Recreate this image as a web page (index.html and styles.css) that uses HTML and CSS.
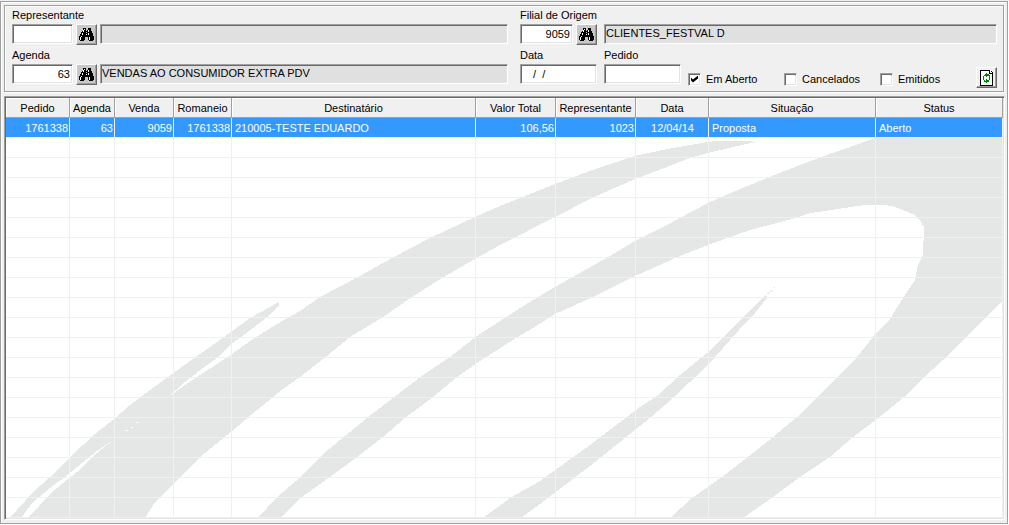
FILE: index.html
```html
<!DOCTYPE html>
<html lang="pt-BR">
<head>
<meta charset="utf-8">
<title>Pedidos</title>
<link rel="stylesheet" href="styles.css">
</head>
<body>
<svg class="defs" aria-hidden="true">
  <symbol id="binoculars" viewBox="0 0 15 13">
    <path d="M4 0h3v2h1V2h1V0h3v3h1v2h1v3h1v4h-1v1h-4v-1H9V9H6v3H5v1H1v-1H0V8h1V6h1V4h1V3h1z"/>
    <path fill="#c8c8c8" d="M7 1h1v2H7zM7 4h1v1H7z"/>
    <path fill="#fff" d="M4 2h1v2H4zM9 2h1v2H9zM3 5h1v2H3zM2 8h1v1H2zM1 9h1v3H1zM7 6h1v1H7zM9 5h1v2H9zM10 9h1v3h-1zM5 1h1v1H5z"/>
  </symbol>
</svg>
<main class="window">
  <form class="filters">
    <div class="column">
      <div class="field">
        <label for="representante">Representante</label>
        <div class="lookup">
          <input class="box code" id="representante" type="text">
          <button class="tool" type="button" aria-label="Buscar representante"><svg class="find"><use href="#binoculars"/></svg></button>
          <input class="box name" type="text" aria-label="Nome do representante" readonly>
        </div>
      </div>
      <div class="field">
        <label for="agenda">Agenda</label>
        <div class="lookup">
          <input class="box code" id="agenda" type="text" value="63">
          <button class="tool" type="button" aria-label="Buscar agenda"><svg class="find"><use href="#binoculars"/></svg></button>
          <input class="box name" type="text" aria-label="Nome da agenda" value="VENDAS AO CONSUMIDOR EXTRA PDV" readonly>
        </div>
      </div>
    </div>
    <div class="column">
      <div class="field">
        <label for="filial">Filial de Origem</label>
        <div class="lookup branch">
          <input class="box code" id="filial" type="text" value="9059">
          <button class="tool" type="button" aria-label="Buscar filial"><svg class="find"><use href="#binoculars"/></svg></button>
          <input class="box name" type="text" aria-label="Nome da filial" value="CLIENTES_FESTVAL D" readonly>
        </div>
      </div>
      <div class="options">
        <div class="field">
          <label for="data">Data</label>
          <input class="box short" id="data" type="text" value="  /  /">
        </div>
        <div class="field">
          <label for="pedido">Pedido</label>
          <input class="box short" id="pedido" type="text">
        </div>
        <div class="checks">
          <label class="check"><input type="checkbox" checked>Em Aberto</label>
          <label class="check"><input type="checkbox">Cancelados</label>
          <label class="check"><input type="checkbox">Emitidos</label>
        </div>
        <button class="tool refresh" type="button" aria-label="Atualizar">
          <svg class="page" viewBox="0 0 13 16">
            <path fill="#fff" d="M0 0h10l3 3v13H0z"/>
            <path d="M0 0h10v1H1v14h11V4H9V1h1v2h2V2h-1V1h1v1h1v14H0z"/>
            <path fill="#008000" d="M6 3h1v1h2v1h1v3H9V6H7v1H6V6H5V4h1zM3 6h1v4H3zM4 5h1v1H4zM6 9h1v1h2v2H7v1H6v-1H4v-2h1v1h1zM9 8h1v2H9z"/>
          </svg>
        </button>
      </div>
    </div>
  </form>

  <div class="grid">
    <svg class="watermark" viewBox="6 138 997 380" preserveAspectRatio="none" aria-hidden="true">
      <path d="M10 518L32 493 50 477 70 457 95 434 113 420 130 405 150 390 172 374 200 354 231 332 250 318 279 302 279 305 267 317 253 328 233 343 217 358 203 368 185 382 167 398 188 383 200 375 217 364 232 354 250 341 277 324 300 311 320 297 360 276 392 258 430 238 475 217 500 206 555 184 595 169 635 156 667 149 708 142 716 141 746 141 756 142 733 147 708 153 690 158 667 167 635 179 592 198 555 217 500 245 475 259 442 278 412 297 383 317 350 337 327 356 300 377 283 389 257 410 232 431 200 457 183 475 170 487 155 502 145 518H28L50 494 63 483 77 472 97 453 113 440 97 451 77 467 65 477 50 488 33 502 21 518z"/>
      <path d="M258 518L277 497 302 476 323 454 345 436 372 414 393 398 423 375 450 357 477 336 500 321 528 303 555 287 578 274 610 256 635 241 667 225 693 211 708 203 733 192 767 178 800 165 827 155 850 147 875 138H1003V301L983 320 965 338 943 360 923 378 903 398 877 419 853 437 830 457 800 477 773 497 743 518H670L692 498 708 487 722 477 753 453 773 437 797 417 817 397 840 375 857 357 873 337 890 319 903 298 915 280 918 265 923 255 924 227 921 222 915 215 903 210 892 206 884 205H864L838 209 810 213 792 219 765 226 750 230 708 245 680 256 635 276 593 297 555 314 533 328 513 340 477 363 457 377 433 397 405 418 383 437 357 457 330 477 302 497 280 518z"/>
      <path d="M483 518L510 498 540 481 590 445 640 407 657 396 680 375 707 353 722 338 740 320 766 294 767 298 755 313 748 320 730 340 708 365 690 382 673 398 650 418 640 426 590 466 540 504 521 518z"/>
      <path class="fleck" d="M125 430h3v1h-3zM131 427h2v1h-2zM136 422h3v1h-3z"/>
      <path class="speck" d="M767 292h3v2h-3zM770 290h3v2h-3zM773 287h2v1h-2z"/>
    </svg>
    <table>
      <colgroup>
        <col class="w-pedido"><col class="w-agenda"><col class="w-venda"><col class="w-romaneio"><col><col class="w-valor"><col class="w-valor"><col class="w-data"><col class="w-situacao"><col class="w-status">
      </colgroup>
      <thead>
        <tr><th>Pedido</th><th>Agenda</th><th>Venda</th><th>Romaneio</th><th>Destinatário</th><th>Valor Total</th><th>Representante</th><th>Data</th><th>Situação</th><th>Status</th></tr>
      </thead>
      <tbody>
        <tr class="selected"><td class="num">1761338</td><td class="num">63</td><td class="num">9059</td><td class="num">1761338</td><td>210005-TESTE EDUARDO</td><td class="num">106,56</td><td class="num">1023</td><td class="mid">12/04/14</td><td>Proposta</td><td>Aberto</td></tr>
        <tr><td><td><td><td><td><td><td><td><td><td></tr>
        <tr><td><td><td><td><td><td><td><td><td><td></tr>
        <tr><td><td><td><td><td><td><td><td><td><td></tr>
        <tr><td><td><td><td><td><td><td><td><td><td></tr>
        <tr><td><td><td><td><td><td><td><td><td><td></tr>
        <tr><td><td><td><td><td><td><td><td><td><td></tr>
        <tr><td><td><td><td><td><td><td><td><td><td></tr>
        <tr><td><td><td><td><td><td><td><td><td><td></tr>
        <tr><td><td><td><td><td><td><td><td><td><td></tr>
        <tr><td><td><td><td><td><td><td><td><td><td></tr>
        <tr><td><td><td><td><td><td><td><td><td><td></tr>
        <tr><td><td><td><td><td><td><td><td><td><td></tr>
        <tr><td><td><td><td><td><td><td><td><td><td></tr>
        <tr><td><td><td><td><td><td><td><td><td><td></tr>
        <tr><td><td><td><td><td><td><td><td><td><td></tr>
        <tr><td><td><td><td><td><td><td><td><td><td></tr>
        <tr><td><td><td><td><td><td><td><td><td><td></tr>
        <tr><td><td><td><td><td><td><td><td><td><td></tr>
        <tr><td><td><td><td><td><td><td><td><td><td></tr>
      </tbody>
    </table>
  </div>
</main>
</body>
</html>
```
FILE: styles.css
```css
* { box-sizing: border-box; }

body {
  margin: 0;
  padding: 1px 1px 1px 0;
  background: #f0f0f0;
  color: #000;
  font: 11px/14px "Liberation Sans", Arial, sans-serif;
}

input, button { font: inherit; color: inherit; margin: 0; }

.defs { position: absolute; width: 0; height: 0; }

.window {
  display: flex;
  flex-direction: column;
  gap: 4px;
  padding: 3px 2px 3px 3px;
  border: 1px solid #a0a0a0;
  box-shadow: inset 1px 1px #fff, 0 1px #fff, 1px 0 #fff;
}

.filters {
  display: grid;
  grid-template-columns: minmax(0, 496fr) minmax(0, 477fr);
  gap: 12px;
  padding: 2px 6px 3px 7px;
  margin-right: 1px;
  border: 1px solid #a0a0a0;
  box-shadow: inset 1px 1px #fff, 1px 1px #fff;
}

.column { display: flex; flex-direction: column; gap: 4px; min-width: 0; }
.field { display: flex; flex-direction: column; gap: 2px; }

.lookup { display: grid; grid-template-columns: 61px 21px 1fr; gap: 3px; height: 20px; }
.lookup.branch { grid-template-columns: 53px 21px 1fr; }
.lookup.branch .name { justify-self: end; width: calc(100% - 4px); }

.box {
  width: 100%;
  height: 20px;
  min-width: 0;
  padding: 0 1px 1px;
  border: 1px solid;
  border-color: #a0a0a0 #fff #fff #a0a0a0;
  border-radius: 0;
  box-shadow: inset 1px 1px #696969, inset -1px -1px #e3e3e3;
  background: #fff;
  outline: 0;
}
.code { padding: 0 2px 0 0; text-align: right; }
.name { background: #e0e0e0; padding-bottom: 2px; }
.short { width: 77px; }
#data { padding-left: 6px; white-space: pre; }

.tool {
  display: flex;
  flex: none;
  align-items: center;
  justify-content: center;
  width: 21px;
  height: 21px;
  padding: 0;
  border: 1px solid;
  border-color: #fff #696969 #696969 #fff;
  box-shadow: inset -1px -1px #a0a0a0;
  background: #f0f0f0;
}
.lookup .tool { background: #c8c8c8; }
.find { width: 15px; height: 13px; shape-rendering: crispEdges; }
.page { flex: none; width: 13px; height: 16px; shape-rendering: crispEdges; }

.options { display: flex; align-items: flex-start; gap: 7px; }
.checks { display: flex; flex: 1; min-width: 0; margin-top: 24px; }
.check { display: flex; align-items: center; gap: 5px; width: 96px; flex: none; }
.check:last-child { width: auto; }
.check input {
  appearance: none;
  width: 13px;
  height: 13px;
  border: 1px solid;
  border-color: #a0a0a0 #fff #fff #a0a0a0;
  box-shadow: inset 1px 1px #696969, inset -1px -1px #e3e3e3;
  background: #fff;
}
.check input:checked::before {
  content: "";
  display: block;
  width: 7px;
  height: 7px;
  margin: 2px;
  background: #000;
  clip-path: polygon(0 28%, 28% 57%, 100% 0, 100% 42%, 28% 100%, 0 71%);
}
.refresh { margin: 19px 0 0; }

.grid {
  position: relative;
  border: 1px solid;
  border-color: #a0a0a0 #fff #fff #a0a0a0;
  box-shadow: inset 1px 1px #696969, inset -1px -1px #e3e3e3;
  padding: 1px;
  background: #fff;
}

.watermark {
  position: absolute;
  top: 41px;
  left: 1px;
  width: calc(100% - 2px);
  height: calc(100% - 42px);
  fill: #e5e7e6;
  shape-rendering: crispEdges;
}
.watermark .fleck { fill: #fff; }
.watermark .speck { fill: #f0f0ea; }

table {
  position: relative;
  width: 100%;
  table-layout: fixed;
  border-collapse: separate;
  border-spacing: 0;
}
.w-pedido { width: 64px; }
.w-agenda { width: 45px; }
.w-venda { width: 59px; }
.w-romaneio { width: 58px; }
.w-valor { width: 80px; }
.w-data { width: 73px; }
.w-situacao { width: 167px; }
.w-status { width: 127px; }

th, td {
  height: 20px;
  padding: 0 2px 0 3px;
  border: solid #f0f0f0;
  border-width: 0 1px 1px 0;
  white-space: nowrap;
  text-align: left;
}
th {
  padding: 0;
  border-color: #a0a0a0;
  background: #f0f0f0;
  box-shadow: inset 1px 1px #fff;
  font-weight: normal;
  text-align: center;
}
.selected td { background: #39f; background-clip: padding-box; color: #fff; }
td.num { padding-right: 1px; text-align: right; }
td.mid { text-align: center; }
```
